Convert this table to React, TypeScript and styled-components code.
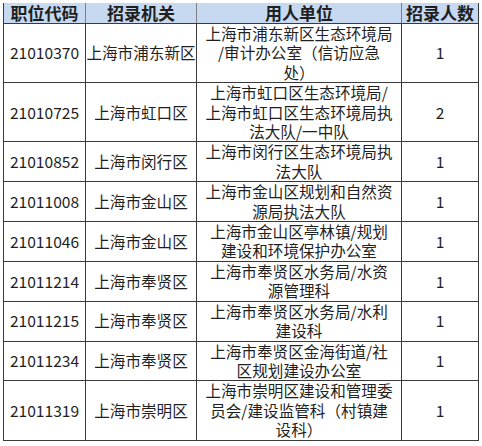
import React from "react";
import styled, { createGlobalStyle } from "styled-components";

const GlobalStyle = createGlobalStyle`
  html, body {
    margin: 0;
    padding: 0;
    background: #ffffff;
  }
  body {
    font-family: "Noto Sans CJK SC", "Liberation Sans", sans-serif;
  }
`;

const Wrap = styled.div`
  padding: 3px 0 0 3px;
`;

const Table = styled.table`
  border-collapse: collapse;
  table-layout: fixed;
  width: 475px;
  color: #1f1f1f;
`;

const HeadCell = styled.th`
  background: #c6d9f0;
  height: 20px;
  padding: 0;
  font-size: 17px;
  font-weight: 700;
  line-height: 20px;
  text-align: center;
  white-space: nowrap;
  overflow: visible;
  border-left: 1px solid #7f7f7f;
  border-right: 1px solid #7f7f7f;
  border-bottom: 1px solid #3a3a3a;
  &:first-child {
    border-left: 1px solid #3a3a3a;
  }
  &:last-child {
    border-right: 1px solid #3a3a3a;
  }
`;

const Cell = styled.td`
  padding: 0;
  font-size: 15.6px;
  line-height: 19.4px;
  text-align: center;
  vertical-align: middle;
  white-space: nowrap;
  overflow: visible;
  border: 1px solid #3a3a3a;
`;

const Line = styled.div`
  display: block;
`;

interface Post {
  code: string;
  org: string;
  unit: string[];
  count: number;
}

const posts: Post[] = [
  { code: "21010370", org: "上海市浦东新区", unit: ["上海市浦东新区生态环境局", "/审计办公室（信访应急", "处）"], count: 1 },
  { code: "21010725", org: "上海市虹口区", unit: ["上海市虹口区生态环境局/", "上海市虹口区生态环境局执", "法大队/一中队"], count: 2 },
  { code: "21010852", org: "上海市闵行区", unit: ["上海市闵行区生态环境局执", "法大队"], count: 1 },
  { code: "21011008", org: "上海市金山区", unit: ["上海市金山区规划和自然资", "源局执法大队"], count: 1 },
  { code: "21011046", org: "上海市金山区", unit: ["上海市金山区亭林镇/规划", "建设和环境保护办公室"], count: 1 },
  { code: "21011214", org: "上海市奉贤区", unit: ["上海市奉贤区水务局/水资", "源管理科"], count: 1 },
  { code: "21011215", org: "上海市奉贤区", unit: ["上海市奉贤区水务局/水利", "建设科"], count: 1 },
  { code: "21011234", org: "上海市奉贤区", unit: ["上海市奉贤区金海街道/社", "区规划建设办公室"], count: 1 },
  { code: "21011319", org: "上海市崇明区", unit: ["上海市崇明区建设和管理委", "员会/建设监管科（村镇建", "设科）"], count: 1 },
];

function App() {
  return (
    <Wrap>
      <GlobalStyle />
      <Table>
        <colgroup>
          <col style={{ width: 82 }} />
          <col style={{ width: 111 }} />
          <col style={{ width: 205 }} />
          <col style={{ width: 77 }} />
        </colgroup>
        <thead>
          <tr>
            <HeadCell>职位代码</HeadCell>
            <HeadCell>招录机关</HeadCell>
            <HeadCell>用人单位</HeadCell>
            <HeadCell>招录人数</HeadCell>
          </tr>
        </thead>
        <tbody>
          {posts.map((p) => (
            <tr key={p.code}>
              <Cell>{p.code}</Cell>
              <Cell>{p.org}</Cell>
              <Cell>
                {p.unit.map((l, i) => (
                  <Line key={i}>{l}</Line>
                ))}
              </Cell>
              <Cell>{p.count}</Cell>
            </tr>
          ))}
        </tbody>
      </Table>
    </Wrap>
  );
}

export default App;
